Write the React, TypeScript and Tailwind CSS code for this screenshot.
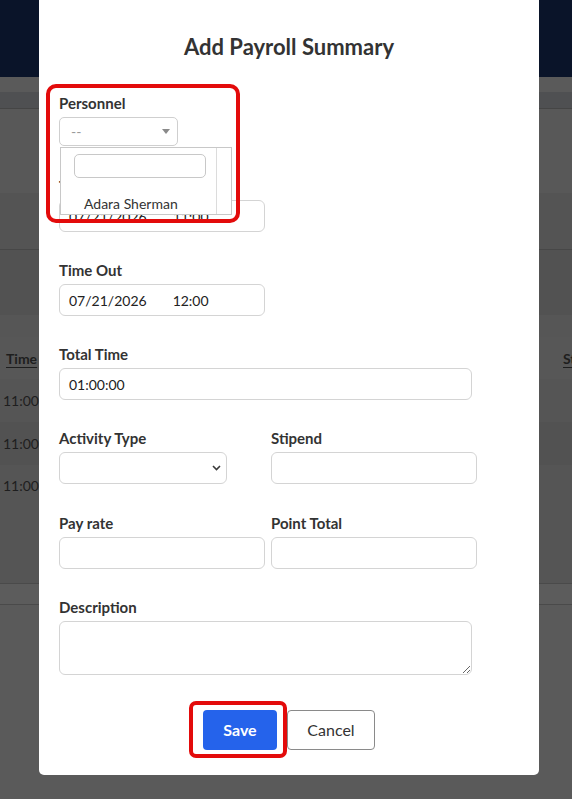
import React from "react";

const box = "border border-[#d4d4d4] rounded-[6px] bg-white";

function Label({ children }: { children: React.ReactNode }) {
  return (
    <div className="text-[15px] leading-[20px] font-bold text-[#333] whitespace-nowrap">
      {children}
    </div>
  );
}

function DateTimeField({ date, time }: { date: string; time: string }) {
  return (
    <div
      className={`mt-[4px] h-[32px] w-[206px] ${box} flex items-center pl-[9px] text-[14px] text-[#222]`}
    >
      <span>{date}</span>
      <span className="ml-[26px]">{time}</span>
    </div>
  );
}

function TextField({ width, value = "" }: { width: string; value?: string }) {
  return (
    <div
      className={`mt-[4px] h-[32px] ${width} ${box} flex items-center pl-[9px] text-[14px] text-[#222]`}
    >
      {value}
    </div>
  );
}

function Backdrop() {
  return (
    <div className="flex flex-col text-[14px] text-[#1e1e1e]">
      <div className="h-[77px] bg-[#0a1429]" />
      <div className="h-[15px] bg-[#5a5a5a]" />
      <div className="h-[17px] bg-[#4f5052] border-b border-[#454545]" />
      <div className="h-[84px] bg-[#585858]" />
      <div className="h-[57px] bg-[#545454] border-b border-[#474747]" />
      <div className="h-[65px] bg-[#525252]" />
      <div className="h-[22px] bg-[#565656]" />
      <div className="h-[42px] bg-[#575757] flex items-center">
        <span className="pl-[6px] font-bold underline underline-offset-[3px]">Time</span>
        <span className="ml-auto w-[9px] whitespace-nowrap font-bold underline underline-offset-[3px]">
          Stipend
        </span>
      </div>
      <div className="h-[43px] bg-[#555555] flex items-center pl-[3px]">11:00</div>
      <div className="h-[43px] bg-[#525252] flex items-center pl-[3px]">11:00</div>
      <div className="h-[118px] bg-[#555555]">
        <div className="h-[41px] flex items-center pl-[3px]">11:00</div>
      </div>
      <div className="h-[22px] bg-[#5c5c5c] border-y border-[#4a4a4a]" />
    </div>
  );
}

function PersonnelPicker() {
  return (
    <div className="mt-[4px] h-[29px] w-[119px] border border-[#cfcfcf] rounded-[5px] bg-white flex items-center pl-[11px] pr-[7px]">
      <span className="text-[14px] text-[#9a9a9a]">--</span>
      <span className="ml-auto w-0 h-0 border-x-[4px] border-t-[5px] border-x-transparent border-t-[#8a8a8a]" />
    </div>
  );
}

function PersonnelDropdown() {
  return (
    <div className="absolute left-[21px] top-[147px] w-[172px] h-[68px] bg-white border border-[#c8c8c8] flex">
      <div className="flex-1 flex flex-col">
        <div className="mt-[6px] ml-[13px] h-[24px] w-[132px] border border-[#c8c8c8] rounded-[5px]" />
        <div className="mt-[17px] ml-[23px] text-[14px] leading-[18px] text-[#333]">Adara Sherman</div>
      </div>
      <div className="w-[15px] border-l border-[#dcdcdc] bg-white" />
    </div>
  );
}

export default function App() {
  return (
    <div className="relative w-[572px] h-[799px] overflow-hidden bg-[#5a5a5a] font-['Lato',sans-serif]">
      <Backdrop />

      <div className="absolute left-[39px] top-0 w-[500px] h-[775px] bg-white rounded-b-[5px] px-[20px]">
        <h2 className="pt-[33px] text-center text-[22px] leading-[28px] font-bold text-[#333]">
          Add Payroll Summary
        </h2>

        <div className="mt-[32px]">
          <Label>Personnel</Label>
          <PersonnelPicker />
        </div>

        <div className="mt-[30px]">
          <Label>Time In</Label>
          <DateTimeField date="07/21/2026" time="11:00" />
        </div>

        <div className="mt-[28px]">
          <Label>Time Out</Label>
          <DateTimeField date="07/21/2026" time="12:00" />
        </div>

        <div className="mt-[28px]">
          <Label>Total Time</Label>
          <TextField width="w-[413px]" value="01:00:00" />
        </div>

        <div className="mt-[28px] flex gap-[6px]">
          <div className="w-[206px]">
            <Label>Activity Type</Label>
            <div className={`mt-[4px] h-[32px] w-[168px] ${box} flex items-center justify-end pr-[5px]`}>
              <svg width="9" height="6" viewBox="0 0 9 6" fill="none">
                <path d="M1 1 L4.5 4.5 L8 1" stroke="#3a3a3a" strokeWidth="1.6" />
              </svg>
            </div>
          </div>
          <div className="w-[206px]">
            <Label>Stipend</Label>
            <TextField width="w-[206px]" />
          </div>
        </div>

        <div className="mt-[29px] flex gap-[6px]">
          <div className="w-[206px]">
            <Label>Pay rate</Label>
            <TextField width="w-[206px]" />
          </div>
          <div className="w-[206px]">
            <Label>Point Total</Label>
            <TextField width="w-[206px]" />
          </div>
        </div>

        <div className="mt-[28px]">
          <Label>Description</Label>
          <textarea
            readOnly
            className={`mt-[4px] block h-[54px] w-[413px] ${box} outline-none`}
          />
        </div>

        <div className="mt-[35px] flex justify-center gap-[10px]">
          <button className="h-[40px] w-[74px] rounded-[4px] bg-[#2563eb] text-white text-[16px] font-bold">
            Save
          </button>
          <button className="h-[40px] w-[88px] rounded-[4px] border border-[#8a8a8a] bg-white text-[#333] text-[16px]">
            Cancel
          </button>
        </div>

        <PersonnelDropdown />

        {/* highlight frames */}
        <div className="absolute left-[7px] top-[84px] w-[194px] h-[139px] border-[4px] border-[#e30b0b] rounded-[10px]" />
        <div className="absolute left-[150px] top-[701px] w-[98px] h-[57px] border-[4px] border-[#e30b0b] rounded-[7px]" />
      </div>
    </div>
  );
}
